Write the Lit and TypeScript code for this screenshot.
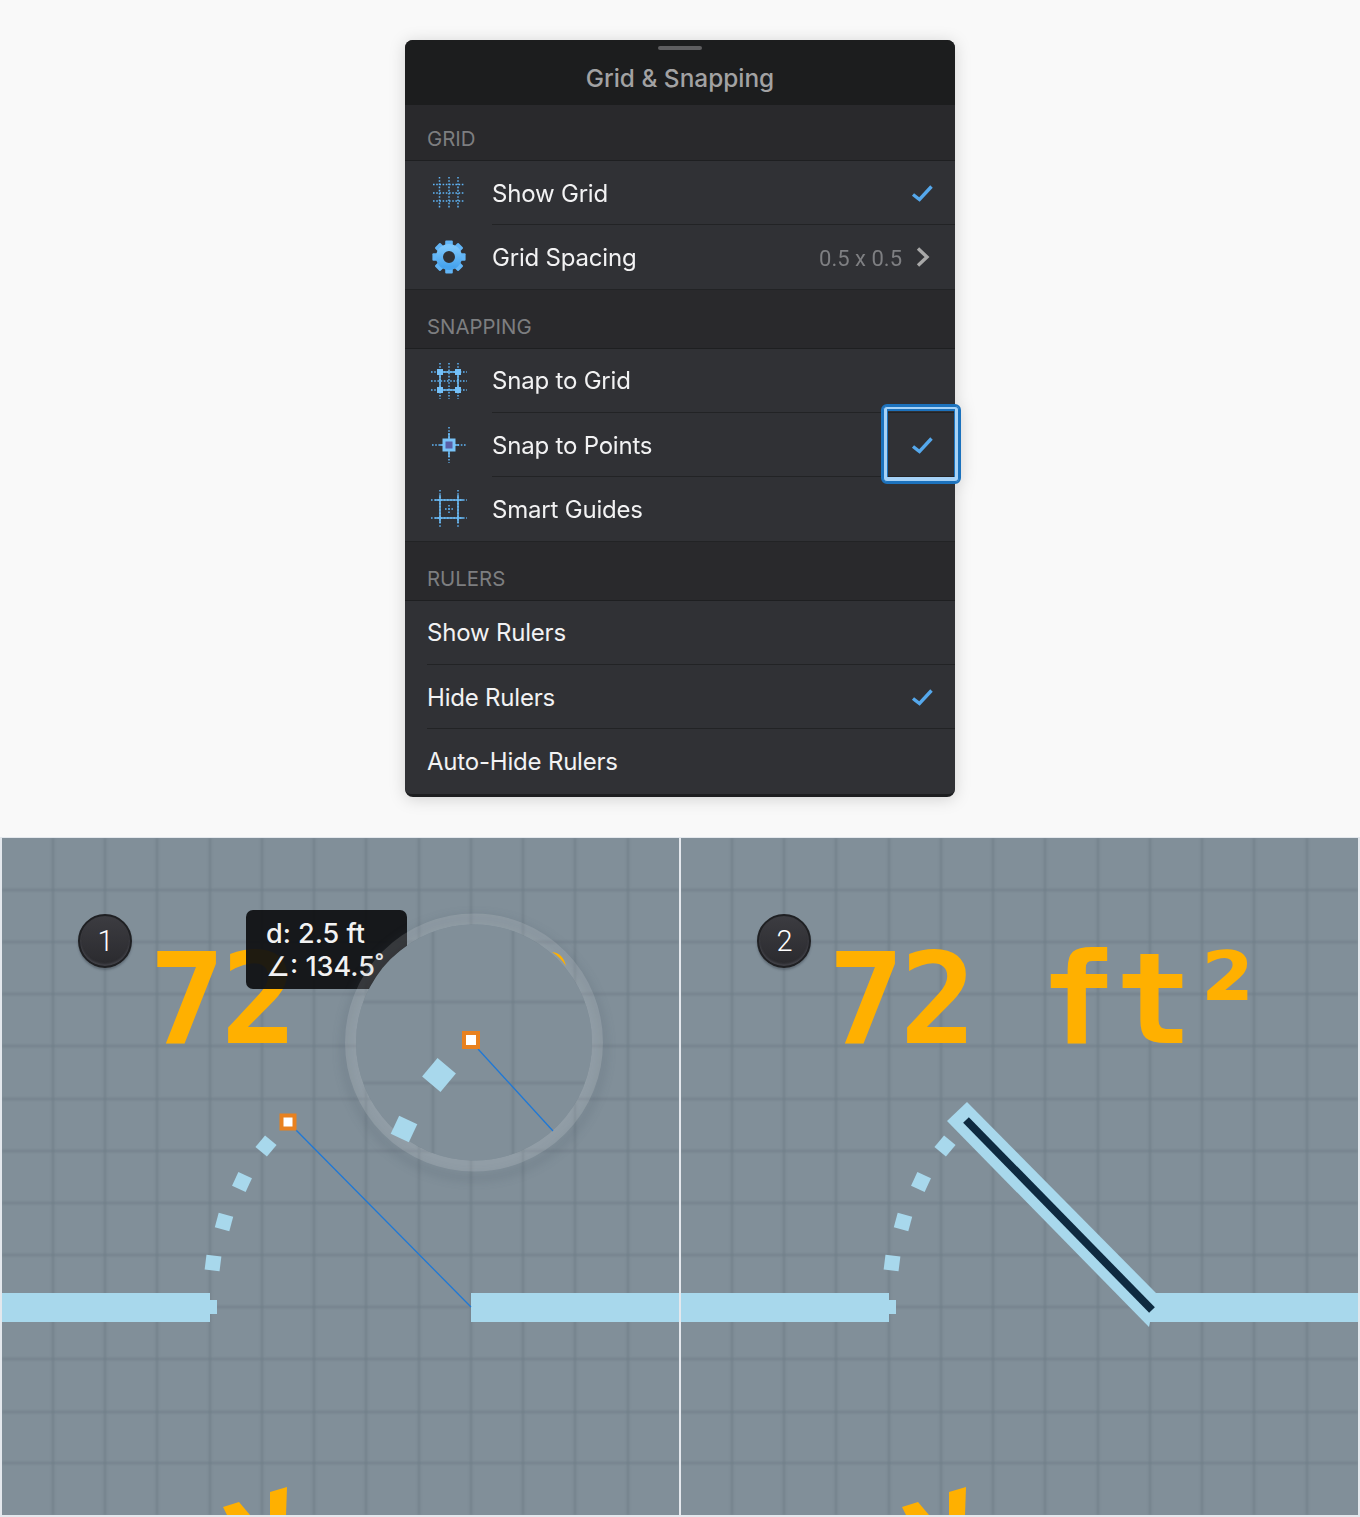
import { LitElement, css, html, svg } from "lit";
import { customElement } from "lit/decorators.js";

type Row = { label: string; icon?: string; value?: string; checked?: boolean; focus?: boolean };
type Group = { title: string; rows: Row[] };

const groups: Group[] = [
  {
    title: "GRID",
    rows: [
      { label: "Show Grid", icon: "grid", checked: true },
      { label: "Grid Spacing", icon: "gear", value: "0.5 x 0.5" },
    ],
  },
  {
    title: "SNAPPING",
    rows: [
      { label: "Snap to Grid", icon: "snapGrid" },
      { label: "Snap to Points", icon: "snapPoints", checked: true, focus: true },
      { label: "Smart Guides", icon: "guides" },
    ],
  },
  {
    title: "RULERS",
    rows: [
      { label: "Show Rulers" },
      { label: "Hide Rulers", checked: true },
      { label: "Auto-Hide Rulers" },
    ],
  },
];

const BLUE = "#5fb4f5";

const dotted = (x1: number, y1: number, x2: number, y2: number) =>
  svg`<line x1=${x1} y1=${y1} x2=${x2} y2=${y2} stroke=${BLUE} stroke-width="1.5" stroke-dasharray="1.6 1.6"></line>`;
const solid = (x1: number, y1: number, x2: number, y2: number) =>
  svg`<line x1=${x1} y1=${y1} x2=${x2} y2=${y2} stroke="#6dbcf6" stroke-width="1.5"></line>`;
const block = (x: number, y: number, s: number) =>
  svg`<rect x=${x - s / 2} y=${y - s / 2} width=${s} height=${s} fill="#74c0f8"></rect>`;

const gearTeeth = [0, 45, 90, 135, 180, 225, 270, 315];

const icons: Record<string, () => unknown> = {
  grid: () => svg`
    ${[10.5, 20, 29].map((x) => dotted(x, 4, x, 36))}
    ${[11.5, 20, 28].map((y) => dotted(4, y, 36, y))}
  `,
  gear: () => svg`
    <defs>
      <linearGradient id="gearFill" x1="0" y1="0" x2="0" y2="1">
        <stop offset="0" stop-color="#7cc6fb"></stop>
        <stop offset="1" stop-color="#46a3ee"></stop>
      </linearGradient>
    </defs>
    ${gearTeeth.map(
      (a) => svg`<rect x="16.2" y="3.4" width="7.6" height="8" rx="1" fill="#62b5f6" transform="rotate(${a} 20 20)"></rect>`
    )}
    <circle cx="20" cy="20" r="9.5" fill="none" stroke="url(#gearFill)" stroke-width="7"></circle>
  `,
  snapGrid: () => svg`
    ${[11, 20, 29].map((x) => dotted(x, 2, x, 38))}
    ${[11, 20, 29].map((y) => dotted(2, y, 38, y))}
    ${solid(11, 11, 29, 11)}${solid(11, 29, 29, 29)}${solid(11, 11, 11, 29)}${solid(29, 11, 29, 29)}
    ${block(11, 11, 6)}${block(29, 11, 6)}${block(11, 29, 6)}${block(29, 29, 6)}
  `,
  snapPoints: () => svg`
    ${dotted(20, 2, 20, 38)}${dotted(3, 20, 38, 20)}
    ${solid(20, 8, 20, 32)}${solid(11, 20, 30, 20)}
    <rect x="13.5" y="13.5" width="13" height="13" fill="#79c3f8"></rect>
    <rect x="16.5" y="16.5" width="7" height="7" fill="#5a5fa6"></rect>
  `,
  guides: () => svg`
    ${dotted(11, 1, 11, 39)}${dotted(29, 1, 29, 39)}
    ${dotted(2, 11, 38, 11)}${dotted(2, 29, 38, 29)}
    ${solid(11, 6, 11, 34)}${solid(29, 6, 29, 34)}
    ${solid(6, 11, 34, 11)}${solid(6, 29, 34, 29)}
    ${dotted(16, 20, 24, 20)}${dotted(20, 16, 20, 24)}
  `,
};

const gridX = [53, 105, 157, 210, 262, 314, 366, 419, 471, 523, 575, 628];
const gridY = [890, 942, 994, 1046, 1099, 1151, 1203, 1255, 1307, 1359, 1412, 1463];

// little squares that trace the dotted arc up to the cursor
const arcDots = [
  { x: 266, y: 1146, a: 40 },
  { x: 242, y: 1182, a: 25 },
  { x: 224, y: 1222, a: 15 },
  { x: 213, y: 1263, a: 7 },
];

const square = (x: number, y: number, s: number, a: number) =>
  svg`<rect class="wall" x=${x - s / 2} y=${y - s / 2} width=${s} height=${s} transform="rotate(${a} ${x} ${y})"></rect>`;

const handle = (x: number, y: number, s: number) => svg`
  <rect x=${x - s / 2} y=${y - s / 2} width=${s} height=${s} fill="#e8811f"></rect>
  <rect x=${x - s / 2 + 4} y=${y - s / 2 + 4} width=${s - 8} height=${s - 8} fill="#fff"></rect>
`;

const baseDrawing = () => svg`
  <g class="soft">
    ${gridX.map((x) => svg`<line class="grid" x1=${x} y1="838" x2=${x} y2="1515"></line>`)}
    ${gridY.map((y) => svg`<line class="grid" x1="2" y1=${y} x2="679" y2=${y}></line>`)}
  </g>
  <rect class="wall" x="2" y="1293" width="208" height="29"></rect>
  <rect class="wall" x="210" y="1300" width="7" height="14"></rect>
  <rect class="wall" x="471" y="1293" width="208" height="29"></rect>
  ${arcDots.map((d) => square(d.x, d.y, 15, d.a))}
  <polygon class="amber" points="223,1507 239,1502 250,1515 227,1515"></polygon>
  <polygon class="amber" points="270,1492 287,1487 286,1515 270,1515"></polygon>
`;

@customElement("app-root")
export class AppRoot extends LitElement {
  static styles = css`
    :host {
      display: block;
      width: 1360px;
      height: 1517px;
      background: #f9f9f9;
      font-family: Inter, "Liberation Sans", sans-serif;
      overflow: hidden;
    }

    .shadow-wrap {
      width: 550px;
      margin: 0 auto;
      padding-top: 40px;
      filter: drop-shadow(0 2px 8px rgba(0, 0, 0, 0.16));
    }
    .sheet {
      height: 757px;
      box-sizing: border-box;
      border-radius: 8px;
      background: #29292c;
      border-bottom: 3px solid #1d1e20;
    }

    .sheet-head {
      height: 65px;
      box-sizing: border-box;
      background: #1c1d1e;
      border-radius: 8px 8px 0 0;
      display: flex;
      flex-direction: column;
      align-items: center;
      padding-top: 6px;
    }
    .grabber {
      width: 44px;
      height: 4px;
      border-radius: 2px;
      background: #5e5e60;
    }
    .sheet-title {
      margin-top: 13px;
      font-size: 24.4px;
      line-height: 30px;
      font-weight: 500;
      color: #a2a2a3;
    }

    .group-title {
      height: 59px;
      box-sizing: border-box;
      display: flex;
      align-items: flex-end;
      padding: 0 0 9px 22px;
      font-size: 20.4px;
      line-height: 24px;
      color: #7d7e80;
      border-bottom: 1px solid #1e1f21;
    }
    .group:first-of-type .group-title {
      height: 56px;
    }

    .row {
      height: 64.33px;
      box-sizing: border-box;
      position: relative;
      display: flex;
      align-items: stretch;
      background: #303135;
      color: #f2f2f3;
      font-size: 24px;
      letter-spacing: -0.2px;
    }
    .group:last-of-type .row:last-child {
      border-radius: 0 0 6px 6px;
    }
    .icon {
      flex: 0 0 87px;
      display: flex;
      align-items: center;
      justify-content: center;
    }
    .icon svg {
      width: 40px;
      height: 40px;
    }
    .body {
      flex: 1;
      display: flex;
      align-items: center;
      border-bottom: 1px solid #222325;
      min-width: 0;
    }
    .row.plain .body {
      margin-left: 22px;
    }
    .row:last-child {
      border-bottom: 1px solid #222325;
    }
    .group:last-of-type .row:last-child {
      border-bottom: 0;
    }
    .row:last-child .body {
      border-bottom: 0;
    }
    .label {
      flex: 1;
      padding-top: 1px;
    }
    .value {
      font-family: Roboto, sans-serif;
      font-size: 22px;
      letter-spacing: 0;
      color: #7e7f82;
      margin-right: 4px;
      padding-top: 3px;
    }
    .trail {
      flex: 0 0 24px;
      margin-right: 20px;
      display: flex;
      justify-content: center;
    }
    .focus {
      position: absolute;
      z-index: 2;
      left: 475.5px;
      top: -8.5px;
      width: 80px;
      height: 80px;
      box-sizing: border-box;
      border: 2px solid #1c72bd;
      border-radius: 6px;
      box-shadow: inset 0 0 0 1px #1c72bd, inset 0 -1px 0 4px #a6d2f7, inset 0 0 0 5px #1c72bd;
      pointer-events: none;
    }

    .figures {
      margin-top: 40px;
      padding: 1px 2px 2px;
      display: grid;
      grid-template-columns: 677px 677px;
      gap: 2px;
      background: #e4e8ed;
    }
    .figure {
      position: relative;
      height: 677px;
      overflow: hidden;
      background: #818f99;
    }
    .figure svg {
      display: block;
      width: 677px;
      height: 677px;
    }
    .soft {
      filter: blur(0.8px);
    }
    .grid {
      stroke: #6f7d88;
      stroke-width: 2.2;
      stroke-opacity: 0.8;
    }
    .wall {
      fill: #a8d8ec;
    }
    .amber {
      fill: #ffb000;
    }
    .area {
      font-family: "DejaVu Sans Mono", monospace;
      font-weight: 700;
      font-size: 127px;
      letter-spacing: -4.5px;
      fill: #ffb000;
    }
    .area-power {
      font-family: "DejaVu Sans", sans-serif;
      font-size: 122px;
    }
    .tip {
      font-size: 27px;
      font-weight: 500;
      fill: #f2f2f2;
    }
    .loupe-shadow {
      filter: blur(5px);
    }
    .badge {
      position: absolute;
      left: 76px;
      top: 76px;
      width: 54px;
      height: 54px;
      box-sizing: border-box;
      border-radius: 50%;
      border: 2px solid #1f2023;
      background: linear-gradient(#3c3c41, #2a2a2e);
      box-shadow: inset 0 -2px 2px rgba(110, 110, 120, 0.35), 0 2px 2px rgba(40, 50, 60, 0.35);
      color: #fff;
      font-family: Roboto, sans-serif;
      font-weight: 300;
      font-size: 29px;
      padding-left: 1px;
      display: flex;
      align-items: center;
      justify-content: center;
    }
  `;

  private renderRow(row: Row) {
    return html`
      <div class="row ${row.icon ? "" : "plain"}">
        ${row.icon
          ? html`<div class="icon"><svg viewBox="0 0 40 40">${icons[row.icon]()}</svg></div>`
          : null}
        <div class="body">
          <span class="label">${row.label}</span>
          ${row.value ? html`<span class="value">${row.value}</span>` : null}
          <span class="trail">
            ${row.checked
              ? html`<svg width="24" height="20" viewBox="0 0 24 20" style="margin-right:1px">
                  <path d="M3 11.5 L9.5 16.5 L21.5 3.5" fill="none" stroke="#55a8ec" stroke-width="3.4"></path>
                </svg>`
              : null}
            ${row.value
              ? html`<svg width="24" height="22" viewBox="0 0 24 22" style="margin-left:5px">
                  <path d="M7 2.5 L16 11 L7 19.5" fill="none" stroke="#a8a8a8" stroke-width="3.4"></path>
                </svg>`
              : null}
          </span>
        </div>
        ${row.focus ? html`<div class="focus"></div>` : null}
      </div>
    `;
  }

  private renderLoupe() {
    return svg`
      <defs>
        <clipPath id="loupeClip"><circle cx="474" cy="1042.5" r="118"></circle></clipPath>
      </defs>
      <circle class="loupe-shadow" cx="474" cy="1048" r="130" fill="none" stroke="#3c4a55" stroke-opacity="0.22" stroke-width="5"></circle>
      <circle cx="474" cy="1042.5" r="123.5" fill="none" stroke="#fff" stroke-opacity="0.13" stroke-width="11"></circle>
      <circle cx="474" cy="1042.5" r="118" fill="#818f99"></circle>
      <g clip-path="url(#loupeClip)">
        <g class="soft">
          <line class="grid" x1="433" y1="930" x2="433" y2="1155"></line>
          <line class="grid" x1="513" y1="930" x2="513" y2="1155"></line>
          <line class="grid" x1="362" y1="1002" x2="586" y2="1002"></line>
          <line class="grid" x1="362" y1="1083" x2="586" y2="1083"></line>
        </g>
      </g>
      ${square(439, 1075, 24, 40)}
      ${square(404, 1129, 20, 25)}
      <path class="amber" d="M552 952 Q563 953 566 966 Q560 957 552 952Z"></path>
      <line x1="478" y1="1049" x2="553" y2="1131" stroke="#1f78d6" stroke-width="1.3"></line>
      ${handle(471, 1040, 18)}
    `;
  }

  private renderFirstFigure() {
    return html`
      <div class="figure">
        <svg viewBox="2 838 677 677">
          ${baseDrawing()}
          <text class="area" x="149" y="1043">72</text>
          <rect x="246" y="910" width="161" height="79" rx="7" fill="#0e0f11" fill-opacity="0.93"></rect>
          <text class="tip" x="266" y="943">d: 2.5 ft</text>
          <text class="tip" x="266" y="976">∠: 134.5˚</text>
          ${this.renderLoupe()}
          <line x1="296" y1="1130" x2="471" y2="1307" stroke="#1f78d6" stroke-width="1.3"></line>
          ${handle(288, 1122, 17)}
        </svg>
        <div class="badge">1</div>
      </div>
    `;
  }

  private renderSecondFigure() {
    return html`
      <div class="figure">
        <svg viewBox="2 838 677 677">
          ${baseDrawing()}
          <text class="area" x="149" y="1043">72 <tspan dx="-4">f</tspan><tspan dx="4">t</tspan><tspan class="area-power" dx="13" dy="-3">²</tspan></text>
          <polygon class="wall" points="288,1102 268,1121 470,1327 477,1293"></polygon>
          <line x1="287" y1="1120" x2="473" y2="1310" stroke="#0e2a40" stroke-width="8"></line>
        </svg>
        <div class="badge">2</div>
      </div>
    `;
  }

  render() {
    return html`
      <div class="shadow-wrap">
        <div class="sheet">
          <div class="sheet-head">
            <div class="grabber"></div>
            <div class="sheet-title">Grid &amp; Snapping</div>
          </div>
          ${groups.map(
            (g) => html`
              <section class="group">
                <div class="group-title">${g.title}</div>
                ${g.rows.map((r) => this.renderRow(r))}
              </section>
            `
          )}
        </div>
      </div>
      <div class="figures">${this.renderFirstFigure()} ${this.renderSecondFigure()}</div>
    `;
  }
}
